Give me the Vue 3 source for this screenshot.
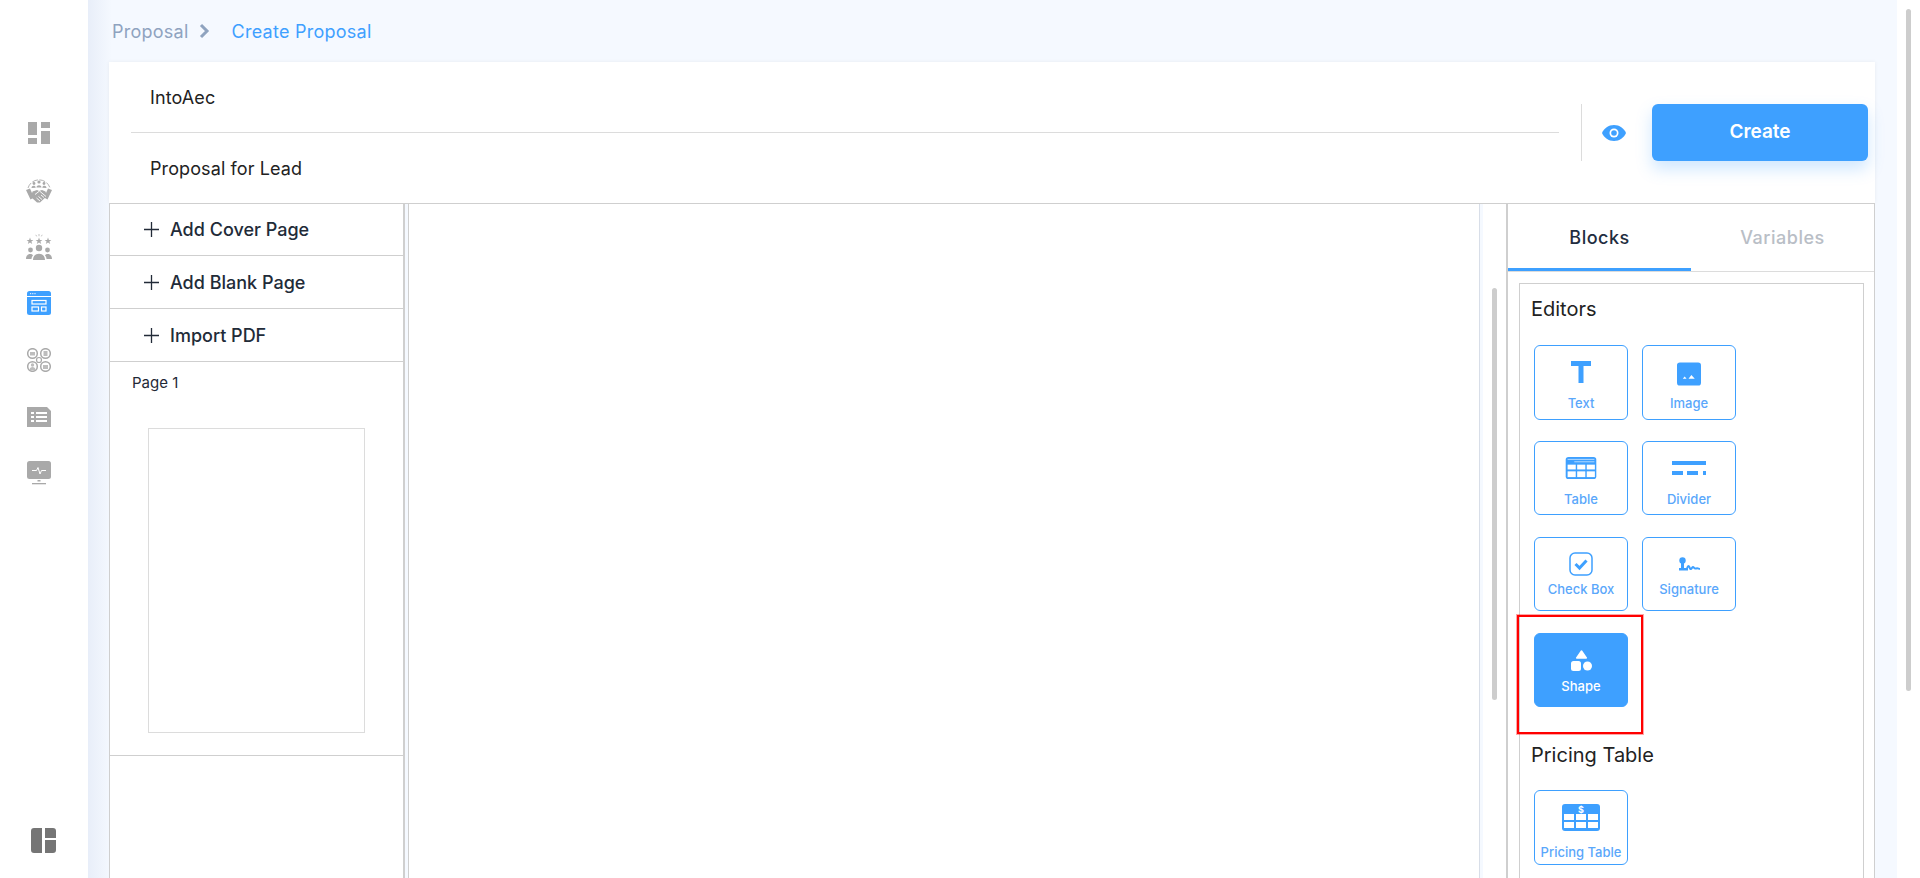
<script setup>
const railIcons = [
  { id: "dash", active: false },
  { id: "deal", active: false },
  { id: "team", active: false },
  { id: "proposal", active: true },
  { id: "network", active: false },
  { id: "list", active: false },
  { id: "monitor", active: false },
];
const addRows = ["Add Cover Page", "Add Blank Page", "Import PDF"];
const editorBlocks = [
  { id: "text", label: "Text" },
  { id: "image", label: "Image" },
  { id: "table", label: "Table", row2: true },
  { id: "divider", label: "Divider", row2: true },
  { id: "checkbox", label: "Check Box", row3: true },
  { id: "signature", label: "Signature", row3: true },
];
</script>

<template>
  <div class="app">
    <aside class="rail">
      <nav class="rail-nav">
        <div v-for="item in railIcons" :key="item.id" class="rail-item">
          <svg v-if="item.id === 'dash'" width="24" height="24" viewBox="0 0 24 24" fill="#a9a9a9">
            <rect x="1" y="1" width="9" height="13" /><rect x="14" y="1" width="9" height="6" /><rect x="1" y="17" width="9" height="6" /><rect x="14" y="10" width="9" height="13" />
          </svg>
          <svg v-else-if="item.id === 'deal'" width="26" height="28" viewBox="0 0 26 28" fill="#a9a9a9">
            <path d="M2 12a11.500 11.500 0 0 1 22 0" fill="none" stroke="#a9a9a9" stroke-width=".9" stroke-dasharray="6 1.500" />
            <circle cx="13" cy="6" r="1.600" /><circle cx="8" cy="7.500" r="1.400" /><circle cx="18" cy="7.500" r="1.400" />
            <path d="M10.500 11.500c0-3 5-3 5 0zM5.500 12c0-2.800 4-2.800 4.200-.3zM16.300 11.700c.2-2.500 4.200-2.500 4.200.3z" />
            <path d="M0 14l4-1.500 4 9-3.500 2zM26 14l-4-1.500-4 9 3.500 2z" />
            <path d="M6.500 15.500l4.500-1.500 2 1 3-1 3.500 1.500 1.500 4.500-7 6.500h-3l-6-5.500z" />
            <path d="M9 18.500l4.500-3.500 6.500 5.500M10.500 22l3.500 3M12.500 20.500l3.500 3M15 19l3 2.500" fill="none" stroke="#fff" stroke-width=".9" />
          </svg>
          <svg v-else-if="item.id === 'team'" width="26" height="26" viewBox="0 0 26 26" fill="#a9a9a9">
            <path d="M13 0v2.200M9.800 .8l.9 1.600M16.200 .8l-.9 1.600" stroke="#a9a9a9" stroke-width=".7" />
            <g v-for="cx in [4, 13, 22]" :key="cx" :transform="`translate(${cx} 7)`">
              <polygon points="0,-3.500 .9,-1.100 3.400,-1.100 1.400,.4 2.200,2.900 0,1.400 -2.200,2.900 -1.400,.4 -3.400,-1.100 -.9,-1.100" />
            </g>
            <circle cx="13" cy="14" r="3.200" /><circle cx="4.500" cy="16" r="2.400" /><circle cx="21.500" cy="16" r="2.400" />
            <path d="M7 26c0-8.500 12-8.500 12 0zM0 25c0-5.500 5.500-6 7-3.500-1 1-1.500 2.200-1.500 3.500zM26 25c0-5.500-5.500-6-7-3.500 1 1 1.500 2.200 1.500 3.500z" />
          </svg>
          <svg v-else-if="item.id === 'proposal'" width="24" height="24" viewBox="0 0 24 24">
            <rect width="24" height="24" rx="2.500" fill="#3ea0ff" />
            <path d="M0 5.500h24" stroke="#fff" stroke-width="1" />
            <path d="M3 2.700h1.200M5.200 2.700h1.200M7.400 2.700h1.200" stroke="#fff" stroke-width="1" />
            <g fill="none" stroke="#fff" stroke-width="1.200"><rect x="5" y="9.500" width="14" height="3.500" /><rect x="5" y="16" width="6.500" height="4" /><rect x="14.500" y="16" width="4.500" height="4" /></g>
          </svg>
          <svg v-else-if="item.id === 'network'" width="24" height="24" viewBox="0 0 24 24" fill="none" stroke="#a9a9a9">
            <circle cx="12" cy="12" r="2.500" stroke-width="1.200" />
            <g stroke-width="1.500"><circle cx="5.500" cy="5.500" r="4.800" /><circle cx="18.500" cy="5.500" r="4.800" /><circle cx="5.500" cy="18.500" r="4.800" /><circle cx="18.500" cy="18.500" r="4.800" /></g>
            <g fill="#bdbdbd" stroke="none"><rect x="3" y="4" width="5" height="3.500" /><rect x="16.500" y="3" width="4" height="5" /><circle cx="5.500" cy="17" r="1.700" /><path d="M2.500 22c0-4 6-4 6 0z" /><rect x="16" y="17" width="5" height="4" /></g>
          </svg>
          <svg v-else-if="item.id === 'list'" width="24" height="20" viewBox="0 0 24 20" fill="#a9a9a9">
            <path d="M0 0h20l4 4v16H0z" />
            <g fill="#fff"><rect x="4" y="5" width="3" height="2" /><rect x="9" y="5" width="11" height="2" /><rect x="4" y="9" width="3" height="2" /><rect x="9" y="9" width="11" height="2" /><rect x="4" y="13" width="3" height="2" /><rect x="9" y="13" width="11" height="2" /></g>
          </svg>
          <svg v-else width="24" height="24" viewBox="0 0 24 24" fill="#a9a9a9">
            <rect width="24" height="18" rx="2.500" />
            <rect x="5" y="22" width="14" height="1.300" />
            <rect x="10.500" y="19" width="3" height="1.500" />
            <path d="M5 9.500h4.500l1.500-3 2 6.500 1.500-3.500H19" fill="none" stroke="#fff" stroke-width="1" />
          </svg>
        </div>
      </nav>
      <div class="rail-foot">
        <svg width="25" height="25" viewBox="0 0 25 25" fill="#757575">
          <path d="M3 0h8v25H3a3 3 0 0 1-3-3V3a3 3 0 0 1 3-3zM14 0h8a3 3 0 0 1 3 3v7H14zM14 12h11v10a3 3 0 0 1-3 3h-8z" />
        </svg>
      </div>
    </aside>

    <main class="main">
      <div class="crumbs">
        <span class="crumb">Proposal</span>
        <svg class="crumb-arrow" width="11" height="16" viewBox="0 0 11 16" fill="none" stroke="#8fa3bf" stroke-width="3"><path d="M2 2l6 6-6 6" /></svg>
        <span class="crumb-current">Create Proposal</span>
      </div>

      <section class="editor">
        <header class="head">
          <div class="head-fields">
            <div class="head-field">IntoAec</div>
            <div class="head-field">Proposal for Lead</div>
          </div>
          <div class="head-actions">
            <svg class="eye" width="24" height="16" viewBox="0 0 24 16">
              <path d="M12 0C6.500 0 2 3.300 0 8c2 4.700 6.500 8 12 8s10-3.300 12-8c-2-4.700-6.500-8-12-8z" fill="#3ea0ff" />
              <circle cx="12" cy="8" r="4.500" fill="#fff" /><circle cx="12" cy="8" r="2.800" fill="#3ea0ff" />
            </svg>
            <button class="create">Create</button>
          </div>
        </header>

        <div class="body">
          <div class="pages">
            <div v-for="row in addRows" :key="row" class="add-row">
              <svg width="15" height="15" viewBox="0 0 15 15" stroke="#222b38" stroke-width="1.300"><path d="M7.500 0v15M0 7.500h15" /></svg>
              <span>{{ row }}</span>
            </div>
            <div class="page-item">
              <div class="page-label">Page 1</div>
              <div class="page-thumb"></div>
            </div>
          </div>

          <div class="canvas"></div>

          <div class="canvas-scroll"><div class="canvas-thumb"></div></div>

          <div class="side">
            <div class="tabs">
              <div class="tab tab-on">Blocks</div>
              <div class="tab">Variables</div>
            </div>
            <div class="blocks">
              <h3 class="group-title">Editors</h3>
              <div class="block-grid">
                <div v-for="b in editorBlocks" :key="b.id" class="block" :class="{ 'row-2': b.row2, 'row-3': b.row3 }">
                  <div class="block-icon">
                    <svg v-if="b.id === 'text'" width="20" height="22" viewBox="0 0 20 22" fill="#3ea0ff"><path d="M0 0h20v5h-7.500v17h-5V5H0z" /></svg>
                    <svg v-else-if="b.id === 'image'" class="icon-low" width="24" height="24" viewBox="0 0 25 24">
                      <rect width="25" height="24" rx="3" fill="#3ea0ff" /><path d="M6 17l2-2.500 2 2.500zM12 17l3-4 3.500 4z" fill="#fff" />
                    </svg>
                    <svg v-else-if="b.id === 'table'" width="32" height="22" viewBox="0 0 32 23">
                      <rect width="32" height="23" rx="3" fill="#3ea0ff" />
                      <path d="M2 2.500h28M9 5h21" stroke="#d8ebff" stroke-width=".8" />
                      <g fill="#fff"><rect x="2" y="8" width="8.500" height="5" /><rect x="12" y="8" width="8.500" height="5" /><rect x="22" y="8" width="8.500" height="5" /><rect x="2" y="15" width="8.500" height="6" /><rect x="12" y="15" width="8.500" height="6" /><rect x="22" y="15" width="8.500" height="6" /></g>
                    </svg>
                    <svg v-else-if="b.id === 'divider'" width="34" height="14" viewBox="0 0 34 14" fill="#3ea0ff">
                      <rect width="34" height="4" /><rect y="10" width="11" height="4" /><rect x="15" y="10" width="11" height="4" /><rect x="31" y="10" width="3" height="4" />
                    </svg>
                    <svg v-else-if="b.id === 'checkbox'" width="24" height="24" viewBox="0 0 24 24" fill="none">
                      <rect x="1" y="1" width="22" height="22" rx="5" stroke="#3ea0ff" stroke-width="1.500" /><path d="M6.500 12l4 4 7-7.500" stroke="#3ea0ff" stroke-width="3" />
                    </svg>
                    <svg v-else width="22" height="14" viewBox="0 0 22 14" fill="#3ea0ff">
                      <circle cx="4.500" cy="3.500" r="3.200" /><path d="M3 6h3v5h4v2.500H1V11h2z" />
                      <path d="M9 11.500c1-3.500 2-3.500 3 0 1 2 2-1.500 3-1.500s1 2 3 1.500 2 0 4 .5" fill="none" stroke="#3ea0ff" stroke-width="2" />
                    </svg>
                  </div>
                  <span class="block-label">{{ b.label }}</span>
                </div>
                <div class="block-wrap">
                  <div class="block block-on">
                    <div class="block-icon">
                      <svg width="21" height="21" viewBox="0 0 21 21" fill="#fff">
                        <path d="M10.500 1l4.800 7H5.700z" stroke="#fff" stroke-linejoin="round" stroke-width="1.500" /><rect y="11" width="10" height="10" rx="2.500" /><circle cx="16.500" cy="16" r="4.500" />
                      </svg>
                    </div>
                    <span class="block-label">Shape</span>
                  </div>
                </div>
              </div>
              <h3 class="group-title pricing-title">Pricing Table</h3>
              <div class="block-grid pricing-grid">
                <div class="block block-pricing">
                  <div class="block-icon">
                    <svg width="38" height="27" viewBox="0 0 38 27">
                      <rect width="38" height="27" rx="3" fill="#3ea0ff" />
                      <text x="19" y="8.500" text-anchor="middle" fill="#fff" font-size="9" font-weight="700" font-family="Inter, sans-serif">$</text>
                      <g fill="#fff"><rect x="2" y="10" width="10" height="6" /><rect x="14" y="10" width="10" height="6" /><rect x="26" y="10" width="10" height="6" /><rect x="2" y="18" width="10" height="6" /><rect x="14" y="18" width="10" height="6" /><rect x="26" y="18" width="10" height="6" /></g>
                    </svg>
                  </div>
                  <span class="block-label">Pricing Table</span>
                </div>
              </div>
            </div>
          </div>
        </div>
      </section>
    </main>

    <div class="page-scroll"><div class="page-scroll-thumb"></div></div>
  </div>
</template>

<style scoped>
.app {
  display: flex;
  height: 878px;
  overflow: hidden;
  font-family: Inter, "Noto Sans", sans-serif;
  color: #1f2937;
  background: #fff;
}

.rail {
  width: 88px;
  flex: none;
  display: flex;
  flex-direction: column;
  justify-content: space-between;
  background: #fff;
}

.rail-nav {
  padding-top: 105px;
  display: flex;
  flex-direction: column;
}

.rail-item {
  height: 56.700px;
  display: flex;
  align-items: center;
  justify-content: center;
  margin-left: -10px;
}

.rail-foot {
  padding: 0 0 25px 31px;
  height: 25px;
}

.main {
  width: 1809px;
  flex: none;
  background: linear-gradient(90deg, #e8eef9 0, #f5f9ff 24px);
  padding: 0 22px 0 21px;
  box-sizing: border-box;
}

.crumbs {
  height: 62px;
  display: flex;
  align-items: center;
  font-size: 18px;
  letter-spacing: .25px;
  padding-left: 3px;
}

.crumb {
  color: #8fa3bf;
}

.crumb-arrow {
  margin: 0 22px 0 10px;
}

.crumb-current {
  color: #3ea0ff;
}

.editor {
  background: #fff;
}

.head {
  height: 141px;
  display: flex;
  align-items: center;
  box-shadow: 0 0 4px rgba(0, 0, 0, .06);
}

.head-fields {
  width: 1428px;
  margin-left: 22px;
  flex: none;
}

.head-field {
  height: 70px;
  display: flex;
  align-items: center;
  padding-left: 19px;
  font-size: 18px;
  letter-spacing: .1px;
  color: #222;
}

.head-field:first-child {
  border-bottom: 1px solid #dcdcdc;
}

.head-actions {
  display: flex;
  align-items: center;
  height: 57px;
  margin-left: 22px;
  padding-left: 20px;
  border-left: 1px solid #dcdcdc;
}

.eye {
  margin-right: 26px;
}

.create {
  width: 216px;
  height: 57px;
  padding: 0 0 2px;
  border: 0;
  border-radius: 6px;
  background: #3ea0ff;
  color: #fff;
  font-family: inherit;
  font-size: 19px;
  font-weight: 600;
  box-shadow: 0 8px 16px rgba(62, 160, 255, .25);
}

.body {
  display: flex;
  height: 675px;
  box-sizing: border-box;
  background: #f5f9ff;
  border-top: 1px solid #cfcfcf;
}

.pages {
  width: 296px;
  flex: none;
  box-sizing: border-box;
  background: #fff;
  border-left: 1px solid #cfcfcf;
  border-right: 2px solid #cfcfcf;
}

.add-row {
  height: 53px;
  box-sizing: border-box;
  display: flex;
  align-items: center;
  gap: 11px;
  padding-left: 34px;
  border-bottom: 1px solid #cfcfcf;
  font-size: 18px;
  font-weight: 500;
  color: #222b38;
}

.add-row:first-child {
  height: 52px;
}

.page-item {
  height: 394px;
  border-bottom: 1px solid #cfcfcf;
  padding: 11px 0 0 22px;
  box-sizing: border-box;
}

.page-label {
  font-size: 15px;
  line-height: 20px;
}

.page-thumb {
  width: 217px;
  height: 305px;
  margin: 35px 0 0 16px;
  border: 1px solid #dcdcdc;
  box-sizing: border-box;
}

.canvas {
  width: 1072px;
  flex: none;
  margin-left: 3px;
  background: #fff;
  border-left: 1px solid #cfcfcf;
  border-right: 1px solid #d8dee8;
  box-sizing: border-box;
}

.canvas-scroll {
  width: 23px;
  flex: none;
  margin-left: 3px;
  background: #fff;
  box-sizing: border-box;
  padding: 84px 0 0 9px;
}

.canvas-thumb {
  width: 5px;
  height: 412px;
  border-radius: 3px;
  background: #cdcdcd;
}

.side {
  width: 369px;
  flex: none;
  box-sizing: border-box;
  background: #fff;
  border-left: 2px solid #cfcfcf;
  border-right: 1px solid #cfcfcf;
}

.tabs {
  display: flex;
  height: 68px;
  box-sizing: border-box;
  border-bottom: 1px solid #dcdcdc;
}

.tab {
  width: 183px;
  display: flex;
  align-items: center;
  justify-content: center;
  font-size: 18px;
  letter-spacing: .5px;
  font-weight: 500;
  color: #b9bec6;
}

.tab-on {
  color: #1f2d40;
  box-shadow: inset 0 -3px 0 #3ea0ff;
}

.blocks {
  margin: 11px 10px 0 11px;
  border: 1px solid #cfcfcf;
  padding: 13px 0 0 14px;
  height: 640px;
  box-sizing: border-box;
}

.group-title {
  margin: 0 0 0 -3px;
  font-size: 20px;
  font-weight: 400;
  line-height: 24px;
  color: #222;
}

.pricing-title {
  margin-top: 9px;
}

.block-grid {
  display: grid;
  grid-template-columns: 94px 94px;
  column-gap: 14px;
  row-gap: 21px;
  margin-top: 24px;
}

.pricing-grid {
  margin-top: 23px;
}

.block {
  width: 94px;
  height: 75px;
  box-sizing: border-box;
  border: 1px solid #3ea0ff;
  border-radius: 6px;
  display: flex;
  flex-direction: column;
  align-items: center;
  padding-top: 10px;
  color: #5aa7fb;
}

.block-icon {
  height: 32px;
  display: flex;
  align-items: center;
  justify-content: center;
}

.icon-low {
  margin-top: 4px;
}

.block-label {
  margin-top: 7px;
  font-size: 13px;
  line-height: 16px;
  font-weight: 500;
}

.block.row-2,
.block.row-3 {
  height: 74px;
}

.block.row-3 {
  margin-top: 1px;
}

.row-3 .block-label {
  margin-top: 1px;
}

.block-wrap {
  grid-column: 1 / 3;
  width: 126px;
  height: 119px;
  margin: -17px 0 0 -17px;
  border: 2px solid #f00;
  outline: 1px solid rgba(255, 0, 0, .35);
  box-sizing: border-box;
  padding: 16px 0 0 15px;
}

.block-on {
  height: 74px;
  background: #3ea0ff;
  color: #fff;
}

.block-on .block-label {
  margin-top: 2px;
}

.block-pricing .block-label {
  margin-top: 11px;
}

.page-scroll {
  width: 23px;
  flex: none;
  padding-top: 9px;
  box-sizing: border-box;
  background: #fff;
}

.page-scroll-thumb {
  width: 5px;
  height: 682px;
  margin-left: 9px;
  border-radius: 3px;
  background: #cdcdcd;
}
</style>

<style>
html, body {
  margin: 0;
  overflow: hidden;
}
</style>
